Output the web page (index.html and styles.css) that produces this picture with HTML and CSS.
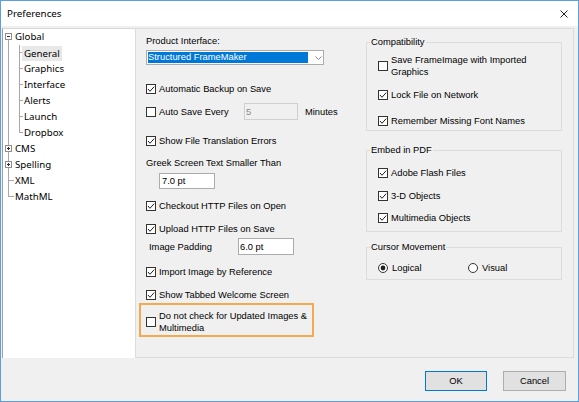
FILE: index.html
```html
<!DOCTYPE html>
<html>
<head>
<meta charset="utf-8">
<title>Preferences</title>
<link rel="stylesheet" href="styles.css">
</head>
<body>
<div class="window">
  <div class="titlebar">
    <span class="title">Preferences</span>
    <svg class="close" width="8" height="8" viewBox="0 0 8 8"><path d="M0.5 0.5L7.5 7.5M7.5 0.5L0.5 7.5" stroke="#222" stroke-width="1" fill="none"/></svg>
  </div>
  <div class="body">
    <div class="tree">
      <div class="tree-row">
        <svg width="12" height="16" viewBox="0 0 12 16"><rect x="2.5" y="4.5" width="6" height="6" fill="#fff" stroke="#8e8e8e"/><path d="M4 7.5h3" stroke="#333"/><path d="M5.5 11v5" stroke="#a8a8a8"/></svg>
        <span class="tree-label">Global</span>
      </div>
      <div class="tree-row">
        <svg width="19" height="16" viewBox="0 0 19 16"><path d="M5.5 0v16M16.5 0v16M16.5 7.5H19" stroke="#a8a8a8" fill="none"/></svg>
        <span class="tree-label sel">General</span>
      </div>
      <div class="tree-row">
        <svg width="21" height="16" viewBox="0 0 21 16"><path d="M5.5 0v16M16.5 0v16M16.5 7.5H20" stroke="#a8a8a8" fill="none"/></svg>
        <span class="tree-label">Graphics</span>
      </div>
      <div class="tree-row">
        <svg width="21" height="16" viewBox="0 0 21 16"><path d="M5.5 0v16M16.5 0v16M16.5 7.5H20" stroke="#a8a8a8" fill="none"/></svg>
        <span class="tree-label">Interface</span>
      </div>
      <div class="tree-row">
        <svg width="21" height="16" viewBox="0 0 21 16"><path d="M5.5 0v16M16.5 0v16M16.5 7.5H20" stroke="#a8a8a8" fill="none"/></svg>
        <span class="tree-label">Alerts</span>
      </div>
      <div class="tree-row">
        <svg width="21" height="16" viewBox="0 0 21 16"><path d="M5.5 0v16M16.5 0v16M16.5 7.5H20" stroke="#a8a8a8" fill="none"/></svg>
        <span class="tree-label">Launch</span>
      </div>
      <div class="tree-row">
        <svg width="21" height="16" viewBox="0 0 21 16"><path d="M5.5 0v16M16.5 0v8M16.5 7.5H20" stroke="#a8a8a8" fill="none"/></svg>
        <span class="tree-label">Dropbox</span>
      </div>
      <div class="tree-row">
        <svg width="12" height="16" viewBox="0 0 12 16"><path d="M5.5 0v4M5.5 11v5" stroke="#a8a8a8"/><rect x="2.5" y="4.5" width="6" height="6" fill="#fff" stroke="#8e8e8e"/><path d="M4 7.5h3M5.5 6v3" stroke="#333"/></svg>
        <span class="tree-label">CMS</span>
      </div>
      <div class="tree-row">
        <svg width="12" height="16" viewBox="0 0 12 16"><path d="M5.5 0v4M5.5 11v5" stroke="#a8a8a8"/><rect x="2.5" y="4.5" width="6" height="6" fill="#fff" stroke="#8e8e8e"/><path d="M4 7.5h3M5.5 6v3" stroke="#333"/></svg>
        <span class="tree-label">Spelling</span>
      </div>
      <div class="tree-row">
        <svg width="12" height="16" viewBox="0 0 12 16"><path d="M5.5 0v16M5.5 7.5H11" stroke="#a8a8a8" fill="none"/></svg>
        <span class="tree-label">XML</span>
      </div>
      <div class="tree-row">
        <svg width="12" height="16" viewBox="0 0 12 16"><path d="M5.5 0v8M5.5 7.5H11" stroke="#a8a8a8" fill="none"/></svg>
        <span class="tree-label">MathML</span>
      </div>
    </div>

    <div class="panel">
      <div class="col-left">
        <div class="lbl">Product Interface:</div>
        <div class="select">
          <span class="sel-value">Structured FrameMaker</span>
          <svg class="chev" width="7" height="4" viewBox="0 0 7 4"><path d="M0.5 0.5L3.5 3.5L6.5 0.5" stroke="#8a8a8a" fill="none"/></svg>
        </div>

        <div class="cb-row r-backup">
          <svg class="cb" width="10" height="10" viewBox="0 0 10 10"><rect x="0.5" y="0.5" width="9" height="9" fill="#fff" stroke="#333"/><path d="M2 5l2 2.3L8.2 2.6" stroke="#222" fill="none"/></svg>
          <span>Automatic Backup on Save</span>
        </div>

        <div class="cb-row autosave">
          <svg class="cb" width="10" height="10" viewBox="0 0 10 10"><rect x="0.5" y="0.5" width="9" height="9" fill="#fff" stroke="#333"/></svg>
          <span class="autosave-text">Auto Save Every</span>
          <input class="field disabled" type="text" value="5" disabled>
          <span class="minutes">Minutes</span>
        </div>

        <div class="cb-row r-errors">
          <svg class="cb" width="10" height="10" viewBox="0 0 10 10"><rect x="0.5" y="0.5" width="9" height="9" fill="#fff" stroke="#333"/><path d="M2 5l2 2.3L8.2 2.6" stroke="#222" fill="none"/></svg>
          <span>Show File Translation Errors</span>
        </div>

        <div class="lbl r-greek">Greek Screen Text Smaller Than</div>
        <input class="field greek-field" type="text" value="7.0 pt">

        <div class="cb-row r-checkout">
          <svg class="cb" width="10" height="10" viewBox="0 0 10 10"><rect x="0.5" y="0.5" width="9" height="9" fill="#fff" stroke="#333"/><path d="M2 5l2 2.3L8.2 2.6" stroke="#222" fill="none"/></svg>
          <span>Checkout HTTP Files on Open</span>
        </div>

        <div class="cb-row r-upload">
          <svg class="cb" width="10" height="10" viewBox="0 0 10 10"><rect x="0.5" y="0.5" width="9" height="9" fill="#fff" stroke="#333"/><path d="M2 5l2 2.3L8.2 2.6" stroke="#222" fill="none"/></svg>
          <span>Upload HTTP Files on Save</span>
        </div>

        <div class="padding-row">
          <span class="padding-text">Image Padding</span>
          <input class="field padding-field" type="text" value="6.0 pt">
        </div>

        <div class="cb-row r-import">
          <svg class="cb" width="10" height="10" viewBox="0 0 10 10"><rect x="0.5" y="0.5" width="9" height="9" fill="#fff" stroke="#333"/><path d="M2 5l2 2.3L8.2 2.6" stroke="#222" fill="none"/></svg>
          <span>Import Image by Reference</span>
        </div>

        <div class="cb-row r-welcome">
          <svg class="cb" width="10" height="10" viewBox="0 0 10 10"><rect x="0.5" y="0.5" width="9" height="9" fill="#fff" stroke="#333"/><path d="M2 5l2 2.3L8.2 2.6" stroke="#222" fill="none"/></svg>
          <span>Show Tabbed Welcome Screen</span>
        </div>

        <div class="notice">
          <svg class="cb" width="10" height="10" viewBox="0 0 10 10"><rect x="0.5" y="0.5" width="9" height="9" fill="#fff" stroke="#333"/></svg>
          <span class="two-line">Do not check for Updated Images &amp;<br>Multimedia</span>
        </div>
      </div>

      <div class="col-right">
        <fieldset class="group g-compat">
          <legend>Compatibility</legend>
          <div class="cb-row tall g-first-6">
            <svg class="cb" width="10" height="10" viewBox="0 0 10 10"><rect x="0.5" y="0.5" width="9" height="9" fill="#fff" stroke="#333"/></svg>
            <span class="two-line">Save FrameImage with Imported<br>Graphics</span>
          </div>
          <div class="cb-row g-next-10">
            <svg class="cb" width="10" height="10" viewBox="0 0 10 10"><rect x="0.5" y="0.5" width="9" height="9" fill="#fff" stroke="#333"/><path d="M2 5l2 2.3L8.2 2.6" stroke="#222" fill="none"/></svg>
            <span>Lock File on Network</span>
          </div>
          <div class="cb-row g-next-12">
            <svg class="cb" width="10" height="10" viewBox="0 0 10 10"><rect x="0.5" y="0.5" width="9" height="9" fill="#fff" stroke="#333"/><path d="M2 5l2 2.3L8.2 2.6" stroke="#222" fill="none"/></svg>
            <span>Remember Missing Font Names</span>
          </div>
        </fieldset>

        <fieldset class="group g-embed">
          <legend>Embed in PDF</legend>
          <div class="cb-row g-first-10">
            <svg class="cb" width="10" height="10" viewBox="0 0 10 10"><rect x="0.5" y="0.5" width="9" height="9" fill="#fff" stroke="#333"/><path d="M2 5l2 2.3L8.2 2.6" stroke="#222" fill="none"/></svg>
            <span>Adobe Flash Files</span>
          </div>
          <div class="cb-row g-next-9">
            <svg class="cb" width="10" height="10" viewBox="0 0 10 10"><rect x="0.5" y="0.5" width="9" height="9" fill="#fff" stroke="#333"/><path d="M2 5l2 2.3L8.2 2.6" stroke="#222" fill="none"/></svg>
            <span>3-D Objects</span>
          </div>
          <div class="cb-row g-next-8">
            <svg class="cb" width="10" height="10" viewBox="0 0 10 10"><rect x="0.5" y="0.5" width="9" height="9" fill="#fff" stroke="#333"/><path d="M2 5l2 2.3L8.2 2.6" stroke="#222" fill="none"/></svg>
            <span>Multimedia Objects</span>
          </div>
        </fieldset>

        <fieldset class="group g-cursor">
          <legend>Cursor Movement</legend>
          <div class="radio-row">
            <div class="radio-opt">
              <svg class="cb" width="10" height="10" viewBox="0 0 10 10"><circle cx="5" cy="5" r="4.5" fill="#fff" stroke="#333"/><circle cx="5" cy="5" r="2.4" fill="#222"/></svg>
              <span>Logical</span>
            </div>
            <div class="radio-opt">
              <svg class="cb" width="10" height="10" viewBox="0 0 10 10"><circle cx="5" cy="5" r="4.5" fill="#fff" stroke="#333"/></svg>
              <span>Visual</span>
            </div>
          </div>
        </fieldset>
      </div>
    </div>
  </div>
  <div class="footer">
    <button class="btn btn-default">OK</button>
    <button class="btn">Cancel</button>
  </div>
</div>
</body>
</html>
```

FILE: styles.css
```css
* { box-sizing: border-box; }
html, body { margin: 0; padding: 0; }
body {
  width: 579px;
  height: 402px;
  overflow: hidden;
  background: #f0f0f0;
  font-family: "Liberation Sans", Arial, sans-serif;
  font-size: 9.35px;
  line-height: 12px;
  color: #000;
}
.window {
  width: 579px;
  height: 402px;
  border: 1px solid #5b9fe0;
  display: flex;
  flex-direction: column;
  background: #f0f0f0;
}
.titlebar {
  height: 25px;
  flex: none;
  background: #fff;
  display: flex;
  align-items: center;
  justify-content: space-between;
  padding: 0 10px 0 6px;
}
.title {
  font-family: "Noto Sans", sans-serif;
  font-size: 9.8px;
  line-height: 13px;
}
.close { display: block; }

.body {
  display: flex;
  height: 332px;
  flex: none;
  padding: 2px 0 0 1px;
}
.tree {
  width: 133px;
  height: 330px;
  flex: none;
  background: #fff;
  border-left: 1px solid #a0a0a0;
  border-top: 1px solid #d8d8d8;
  font-family: "Noto Sans", sans-serif;
  font-size: 9.7px;
  line-height: 16px;
}
.tree-row {
  display: flex;
  align-items: center;
  height: 16px;
  white-space: nowrap;
}
.tree-row svg { display: block; flex: none; }
.tree-label.sel {
  background: #e8e8e8;
  line-height: 15px;
  padding: 0 2px 0 2px;
  margin-left: 0;
}
.tree-row svg[width="19"] + .tree-label { margin-left: 0; }

.panel {
  width: 439px;
  height: 330px;
  flex: none;
  border: 1px solid #dcdcdc;
  display: flex;
  padding: 6px 0 0 10px;
}
.col-left {
  width: 200px;
  flex: none;
  display: flex;
  flex-direction: column;
  align-items: flex-start;
}
.col-right {
  width: 196px;
  flex: none;
  margin-left: 20px;
}
.lbl { height: 12px; white-space: nowrap; }

.select {
  margin-top: 3px;
  width: 178px;
  height: 15px;
  border: 1px solid #acacac;
  background: #fff;
  padding: 1px;
  display: flex;
  align-items: center;
}
.sel-value {
  width: 160px;
  height: 11px;
  line-height: 11px;
  background: #0078d7;
  color: #fff;
  padding-left: 0;
  white-space: nowrap;
}
.chev { display: block; margin-left: 7px; }

.cb-row {
  display: flex;
  align-items: center;
  height: 14px;
  white-space: nowrap;
}
.cb-row.tall { height: 24px; }
.cb { display: block; flex: none; margin-right: 3px; }

.r-backup { margin-top: 17px; }
.autosave { margin-top: 7px; height: 17px; }
.autosave-text { width: 85px; }
.minutes { margin-left: 7px; }
.r-errors { margin-top: 14px; }
.r-greek { margin-top: 9px; }
.r-checkout { margin-top: 10px; }
.r-upload { margin-top: 9px; }
.r-import { margin-top: 10px; }
.r-welcome { margin-top: 9px; }

.field {
  font: inherit;
  color: #000;
  height: 16px;
  width: 56px;
  border: 1px solid #acacac;
  background: #fff;
  padding: 0 1px;
  margin: 0;
  outline: none;
}
.field.disabled {
  width: 54px;
  height: 17px;
  background: #f0f0f0;
  border-color: #cfcfcf;
  color: #8a8a8a;
}
.greek-field { margin-top: 4px; margin-left: 13px; padding-left: 2px; }

.padding-row {
  margin-top: 2px;
  display: flex;
  align-items: center;
  height: 17px;
  white-space: nowrap;
}
.padding-text { width: 89px; margin-left: 3px; }
.padding-field { height: 17px; }

.notice {
  margin-top: 1px;
  margin-left: -7px;
  width: 175px;
  height: 34px;
  border: 2px solid #f5a94f;
  display: flex;
  align-items: center;
  padding: 4px 0 0 5px;
}
.two-line { line-height: 12px; white-space: nowrap; }

.group {
  margin: 0;
  padding: 0 0 0 3px;
  border: 1px solid #dcdcdc;
  min-width: 0;
}
.group legend {
  padding: 0 1px;
  line-height: 12px;
  white-space: nowrap;
}
.group .cb-row, .group .radio-row { margin-left: 8px; }
.g-compat { margin-top: 1px; padding-bottom: 2px; }
.g-embed { margin-top: 13px; padding-bottom: 6px; }
.g-cursor { margin-top: 9px; padding-bottom: 4px; }
.g-first-6 { margin-top: 6px; }
.g-first-10 { margin-top: 10px; }
.g-next-10 { margin-top: 10px; }
.g-next-12 { margin-top: 12px; }
.g-next-9 { margin-top: 9px; }
.g-next-8 { margin-top: 8px; }

.radio-row {
  display: flex;
  height: 14px;
  margin-top: 8px;
}
.radio-opt {
  display: flex;
  align-items: center;
  width: 90px;
}
.radio-opt .cb { margin-right: 4px; }

.footer {
  height: 42px;
  flex: none;
  display: flex;
  justify-content: flex-end;
  align-items: flex-start;
  gap: 16px;
  padding: 13px 12px 0 0;
}
.btn {
  font: inherit;
  color: #000;
  width: 63px;
  height: 20px;
  padding: 0;
  margin: 0;
  background: #e1e1e1;
  border: 1px solid #adadad;
  border-radius: 0;
}
.btn-default { width: 62px; border-color: #0078d7; }
```
